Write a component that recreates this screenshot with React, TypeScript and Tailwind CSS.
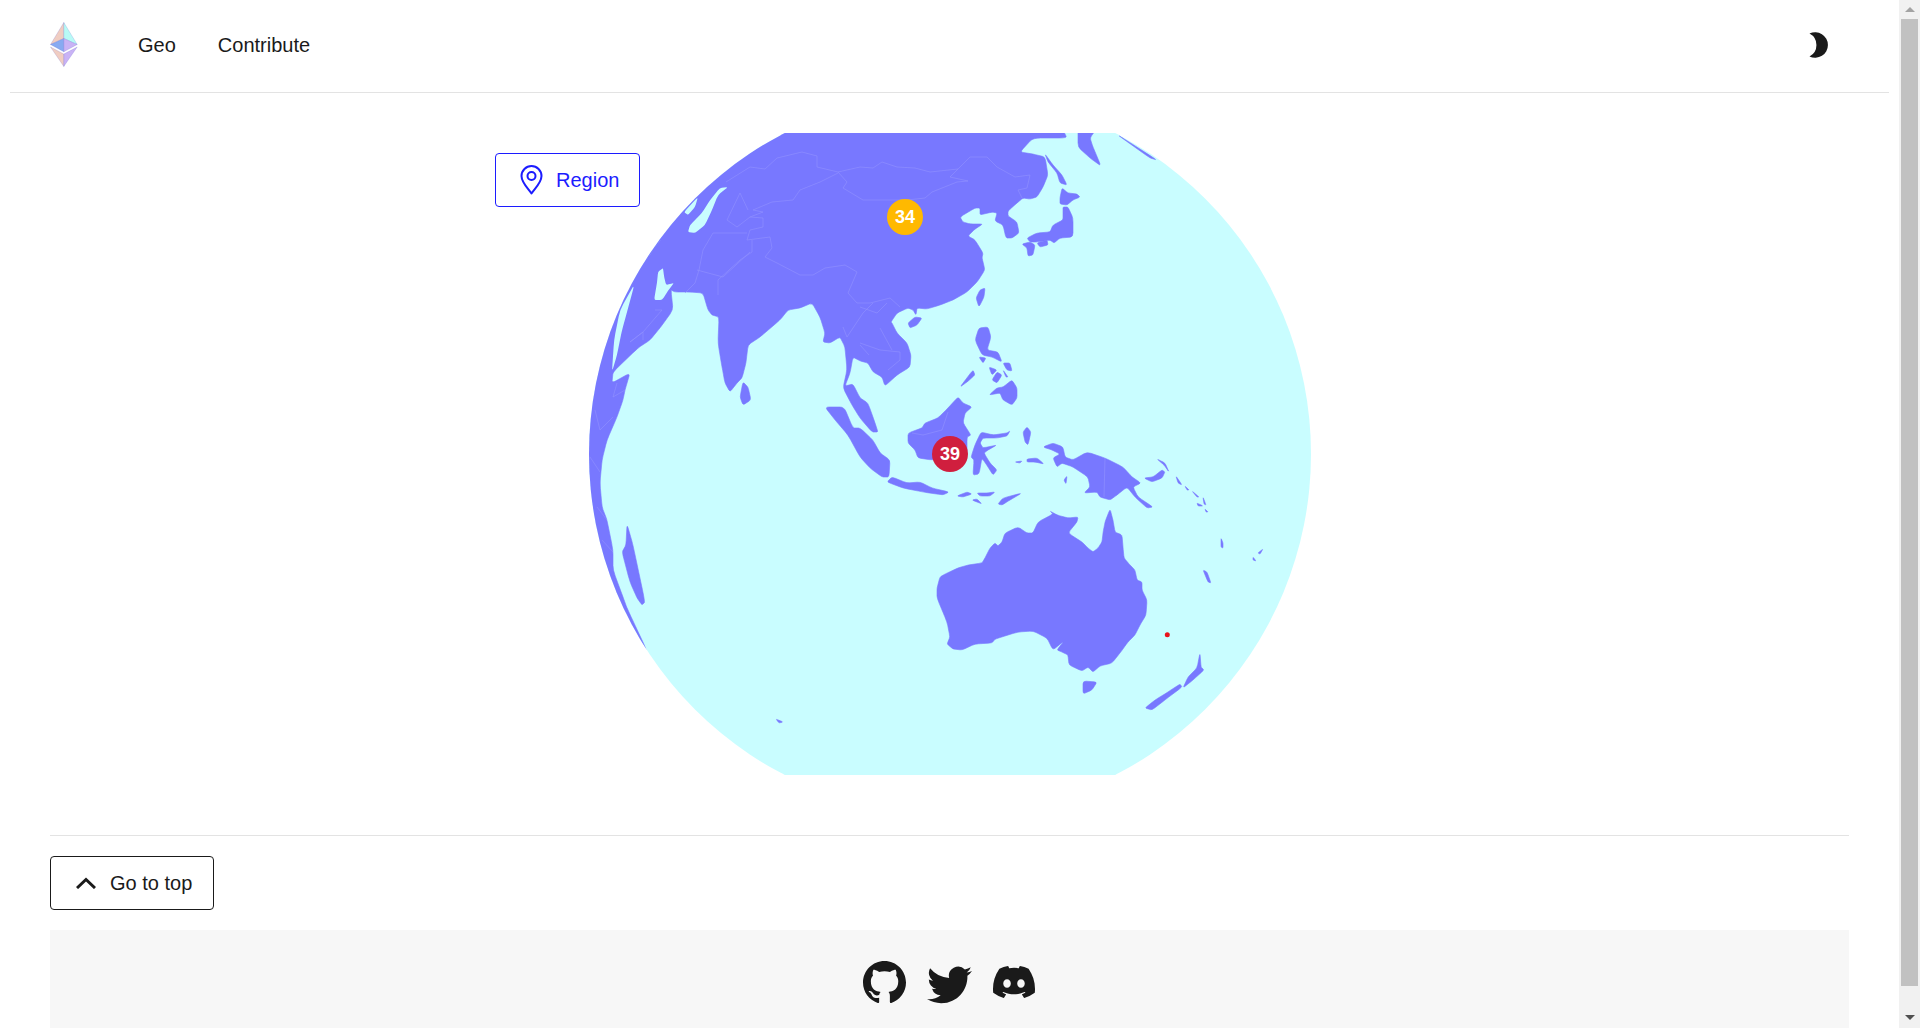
import { BsDiscord, BsGithub, BsTwitter } from 'react-icons/bs';

// globe outlines, in page pixels (the svg's viewBox starts at 589,133)
const land = [
  // eurasia + the african rim
  '1063,130 1067,138 1033,138 1020,152 1033,154 1045,157 1048,175 1043,187 1037,197 1030,199 1023,198 1017,203 1008,211 1008,216 1017,222 1019,233 1012,238 1006,238 1003,225 995,221 997,213 992,212 980,215 980,208 975,208 960,217 963,222 970,224 983,224 975,229 968,236 975,240 983,253 982,258 985,270 977,282 967,292 953,300 940,305 927,309 917,308 916,315 913,310 908,308 897,313 891,322 892,323 897,333 907,343 911,355 910,367 897,375 885,386 882,377 873,372 868,363 860,361 853,357 850,373 845,386 853,384 860,398 868,403 875,423 878,432 872,432 860,418 852,405 843,388 847,370 845,347 840,337 830,343 823,342 825,333 820,317 812,303 800,308 788,310 780,320 760,337 748,345 746,363 742,378 737,383 730,392 725,383 722,367 718,343 719,317 712,315 708,310 703,293 690,292 675,292 671,290 673,310 660,328 650,340 638,348 613,372 612,383 630,373 625,390 623,400 617,417 607,440 602,460 600,483 602,507 607,520 613,550 613,570 623,597 627,608 648,653 640,660 580,500 580,120 1063,120',
  // kamchatka, sakhalin, japan
  '1078,128 1097,128 1090,138 1093,147 1101,166 1090,158 1078,147',
  '1045,154 1053,165 1062,175 1067,185 1060,183 1057,173 1048,162',
  '1062,188 1068,193 1077,194 1080,197 1073,200 1067,205 1060,204 1060,198',
  '1063,207 1068,207 1073,218 1073,237 1060,238 1054,243 1050,240 1037,242 1030,242 1027,238 1037,233 1050,232 1053,225 1063,220 1063,212',
  '1022,244 1030,242 1035,245 1033,255 1028,256 1027,248',
  '1037,243 1047,240 1048,245 1040,247',
  // taiwan, hainan, sri lanka
  '985,288 980,290 976,298 979,307 984,297',
  '908,323 915,317 922,318 917,325 910,328',
  '743,382 748,387 751,400 743,405 740,397',
  // sumatra, java, lesser sunda
  '825,407 844,407 853,428 860,428 873,440 880,453 890,460 889,477 882,477 870,468 860,457 848,435 835,420',
  '887,482 892,477 907,483 920,482 932,488 949,492 943,495 923,492 903,488',
  '957,496 967,492 972,494 963,497',
  '977,493 987,493 995,492 990,496 980,496',
  '972,500 977,499 982,504',
  '998,504 1003,498 1022,493 1010,500 1002,505',
  // borneo, sulawesi, halmahera and friends
  '908,433 922,428 925,423 938,418 948,408 958,397 963,403 972,407 965,413 963,423 971,435 967,437 967,457 932,460 918,458 915,450 908,443',
  '981,432 993,435 1007,433 1010,431 1007,436 997,438 983,438 980,443 983,448 997,445 988,450 984,453 990,463 997,470 993,475 988,467 982,458 979,474 973,475 974,460 971,457 975,445',
  '1023,432 1027,427 1031,432 1028,445 1025,442',
  '1015,462 1022,461 1020,463',
  '1027,459 1037,458 1044,464 1035,462 1027,462',
  '1064,480 1067,476 1066,484',
  // new guinea and the solomons
  '1043,447 1053,443 1063,447 1065,457 1073,460 1087,452 1105,458 1123,467 1132,477 1141,483 1133,487 1138,497 1153,507 1147,508 1135,497 1127,487 1117,495 1110,500 1100,497 1097,492 1084,493 1090,487 1088,477 1073,467 1062,463 1057,467 1053,458 1060,454 1052,450',
  '1144,478 1153,477 1162,470 1165,472 1162,478 1152,482',
  '1157,459 1165,463 1169,472 1164,465',
  '1176,476 1182,485 1178,483',
  '1185,486 1189,490 1187,490',
  '1192,491 1199,497 1197,497',
  '1197,503 1203,506 1198,506',
  '1203,497 1206,505 1204,504',
  '1205,509 1208,512 1206,512',
  // philippines
  '979,328 988,327 991,337 987,350 998,352 1002,362 992,357 982,355 975,340',
  '979,357 986,358 983,363',
  '989,367 997,370 992,375',
  '1003,363 1010,363 1012,371 1007,370',
  '1003,370 1008,377 1006,377',
  '997,372 1002,375 997,383 992,380',
  '989,395 997,388 1003,387 1012,380 1017,388 1017,398 1012,405 1003,400 1000,393',
  '960,387 973,370 975,375 967,382',
  // australia
  '937,588 940,577 945,574 958,568 968,565 982,563 985,558 990,548 995,543 998,546 1002,542 1005,533 1018,527 1027,533 1033,533 1038,522 1053,514 1050,511 1057,515 1068,518 1078,517 1077,522 1068,533 1082,542 1088,548 1093,552 1098,548 1102,542 1103,533 1105,522 1110,509 1113,520 1115,532 1122,535 1123,547 1124,558 1130,565 1135,570 1137,580 1142,582 1142,590 1147,600 1146,615 1140,625 1135,635 1128,642 1120,653 1112,663 1100,666 1093,672 1088,667 1082,671 1069,665 1068,655 1062,652 1057,650 1064,641 1053,650 1047,638 1033,631 1018,632 995,639 992,643 975,644 962,650 953,649 947,644 950,637 947,622 937,598',
  '1083,681 1097,682 1092,690 1083,694',
  // new zealand, pacific specks, madagascar
  '1200,653 1201,667 1204,670 1193,680 1183,688 1188,677 1197,668',
  '1180,684 1182,687 1165,700 1152,710 1145,708 1155,700 1168,692',
  '1203,570 1207,572 1211,583 1208,582',
  '1221,538 1223,543 1223,548 1221,547',
  '1253,557 1256,561 1253,560',
  '1258,553 1263,549 1260,554',
  '776,719 783,722 779,723',
  '627,524 633,545 645,602 642,605 637,598 630,582 622,552 626,545',
  // thin sliver on the rim, top right
  '1115,133 1157,160 1150,158',
];

// inland seas cut back out of the land
const seas = [
  '663,268 658,272 657,283 654,300 662,300 670,288 674,283 666,285 664,276',
  '728,187 720,188 710,200 702,213 690,225 688,232 695,233 705,225 712,210 718,195',
  '698,197 684,212 688,215 695,207',
  '662,238 643,265 657,245',
  '635,283 620,310 614,340 612,372 617,355 622,330',
];

const borders = [
  '726,182 750,167 765,169 777,158 802,152 817,156 817,167 838,172 860,167 873,168 882,162 897,167 915,168 930,172 958,169 970,157 987,157 997,167 1015,177 1030,175 1027,188 1018,190 1022,198',
  '838,172 847,182 843,188 863,200 873,200 907,200 925,198 932,192 957,182 968,181 950,177 958,169',
  '838,173 820,182 800,190 793,200 772,202 753,210 763,212 750,217 763,218 763,227 750,230 747,240 770,237 772,248 765,257 777,263 800,275 813,275 825,268 845,265 857,272 848,293 857,303 870,303 890,298 900,307',
  '752,240 752,252 740,260 718,280 718,295',
  '747,233 735,233 713,233 703,250 699,270 695,283 685,293',
  '750,217 737,227 727,220 740,193 748,210',
  '697,270 723,277 750,252',
  '655,310 662,310 643,332 630,342 643,332 643,340',
  '843,327 847,337 863,313 873,303',
  '860,307 877,313 887,303',
  '860,343 880,350 900,352 900,360 888,370',
  '880,328 892,350',
  '869,355 860,345',
  '912,433 923,435 942,430 948,412',
  '1105,458 1104,497',
  '595,410 600,430 613,417',
  '590,457 600,472',
  '597,507 607,520',
  '602,540 613,552',
  '617,383 613,397 625,390',
];

// rounds each corner a little, the coasts look too cut-out with straight joins
const toCoast = (points: string) => {
  const pts = points.split(' ').map((p) => p.split(',').map(Number));
  const cut = 0.22;
  const at = (a: number[], b: number[], t: number) =>
    `${(a[0] + (b[0] - a[0]) * t).toFixed(1)} ${(a[1] + (b[1] - a[1]) * t).toFixed(1)}`;
  let d = '';
  pts.forEach((p, i) => {
    const prev = pts[(i - 1 + pts.length) % pts.length];
    const next = pts[(i + 1) % pts.length];
    d += `${i === 0 ? 'M' : 'L'}${at(p, prev, cut)} Q${p[0]} ${p[1]} ${at(p, next, cut)} `;
  });
  return d + 'Z';
};

const Logo = () => (
  <svg width="28" height="46" viewBox="0 0 28 46" className="shrink-0">
    <g stroke="#1616b4" strokeOpacity="0.25" strokeWidth="0.5" strokeLinejoin="round">
      <polygon points="13.8,0.5 0.5,22.5 13.8,16.5" fill="#f0cdc2" />
      <polygon points="13.8,0.5 27.2,22.5 13.8,16.5" fill="#b8faf6" />
      <polygon points="13.8,16.5 0.5,22.5 13.8,29.8" fill="#88aaf1" />
      <polygon points="13.8,16.5 27.2,22.5 13.8,29.8" fill="#c9b3f5" />
      <polygon points="0.5,25 13.8,32 13.8,44.5" fill="#f0cdc2" />
      <polygon points="27.2,25 13.8,32 13.8,44.5" fill="#c9b3f5" />
    </g>
  </svg>
);

const Moon = () => (
  <svg width="20" height="26" viewBox="0 0 20 26" className="shrink-0" fill="#1a1a1a">
    <path d="M0.5 1.5 A12.8 12.8 0 1 1 0.5 24.5 A13 13 0 0 0 0.5 1.5 Z" />
  </svg>
);

const Pin = () => (
  <svg width="23" height="30" viewBox="0 0 23 30" fill="none" stroke="#1c1cff" strokeWidth="2" className="shrink-0">
    <path d="M11.5 28.5 C8 23.5 1.5 17.5 1.5 11 A10 10 0 0 1 21.5 11 C21.5 17.5 15 23.5 11.5 28.5 Z" strokeLinejoin="round" />
    <circle cx="11.5" cy="11" r="4" />
  </svg>
);

const ChevronUp = () => (
  <svg width="20" height="12" viewBox="0 0 20 12" fill="none" stroke="#1a1a1a" strokeWidth="3" className="shrink-0">
    <polyline points="1,11 10,2.5 19,11" />
  </svg>
);

const Globe = () => (
  <svg width="722" height="642" viewBox="589 133 722 642" className="block">
    <defs>
      <clipPath id="sphere">
        <circle cx="950" cy="454" r="361" />
      </clipPath>
    </defs>
    <circle cx="950" cy="454" r="361" fill="#c9fdff" />
    <g clipPath="url(#sphere)">
      <g fill="#7878ff" stroke="#7878ff" strokeWidth="0.6">
        {land.map((points) => (
          <path key={points} d={toCoast(points)} />
        ))}
      </g>
      <g fill="#c9fdff">
        {seas.map((points) => (
          <path key={points} d={toCoast(points)} />
        ))}
      </g>
      <g fill="none" stroke="#9292ff" strokeWidth="0.6">
        {borders.map((points) => (
          <polyline key={points} points={points} />
        ))}
      </g>
    </g>
    <circle cx="1167.3" cy="634.7" r="2.5" fill="#e8141c" />
    <circle cx="905" cy="217" r="18" fill="#ffb900" />
    <text x="905" y="223" textAnchor="middle" fill="#ffffff" className="text-[18px] font-bold">34</text>
    <circle cx="950" cy="454" r="18" fill="#d01f3e" />
    <text x="950" y="460" textAnchor="middle" fill="#ffffff" className="text-[18px] font-bold">39</text>
  </svg>
);

export default function App() {
  return (
    <div className="flex h-[1028px] overflow-hidden bg-white font-['Liberation_Sans',Arial,sans-serif] text-[20px] text-[#1a1a1a]">
      <div className="w-[1899px] shrink-0">
        {/* Header */}
        <header className="mx-[10px] flex h-[93px] items-center border-b border-[#e3e3e3] pb-[2px]">
          <div className="ml-[40px]">
            <Logo />
          </div>
          <a className="ml-[60px]">Geo</a>
          <a className="ml-[42px]">Contribute</a>
          <div className="ml-auto mr-[60px]">
            <Moon />
          </div>
        </header>

        {/* Map */}
        <div className="relative ml-[589px] mt-[40px] h-[642px] w-[722px]">
          <Globe />
          <button className="absolute -left-[94px] top-[20px] flex h-[54px] w-[145px] items-center gap-[13px] rounded border border-[#1c1cff] pl-[24px] text-[#1c1cff]">
            <Pin />
            Region
          </button>
        </div>

        <div className="mx-[50px] mt-[60px] h-px bg-[#e3e3e3]" />

        <button className="ml-[50px] mt-[20px] flex h-[54px] w-[164px] items-center gap-[14px] rounded border border-[#1a1a1a] pl-[25px]">
          <ChevronUp />
          Go to top
        </button>

        {/* Footer */}
        <footer className="mx-[50px] mt-[20px] flex h-[200px] justify-center gap-[21px] bg-[#f7f7f7] pr-px pt-[31px]">
          <BsGithub size={43} className="shrink-0" />
          <BsTwitter size={45} className="shrink-0" />
          <BsDiscord size={42} className="shrink-0" />
        </footer>
      </div>

      {/* Scrollbar */}
      <div className="flex w-[21px] shrink-0 flex-col items-center bg-[#f1f1f1]">
        <div className="mt-[7px] h-0 w-0 border-x-[5px] border-b-[5px] border-x-transparent border-b-[#a3a3a3]" />
        <div className="mt-[7px] h-[967px] w-[17px] bg-[#c1c1c1]" />
        <div className="mt-[29px] h-0 w-0 border-x-[5px] border-t-[5px] border-x-transparent border-t-[#505050]" />
      </div>
    </div>
  );
}
